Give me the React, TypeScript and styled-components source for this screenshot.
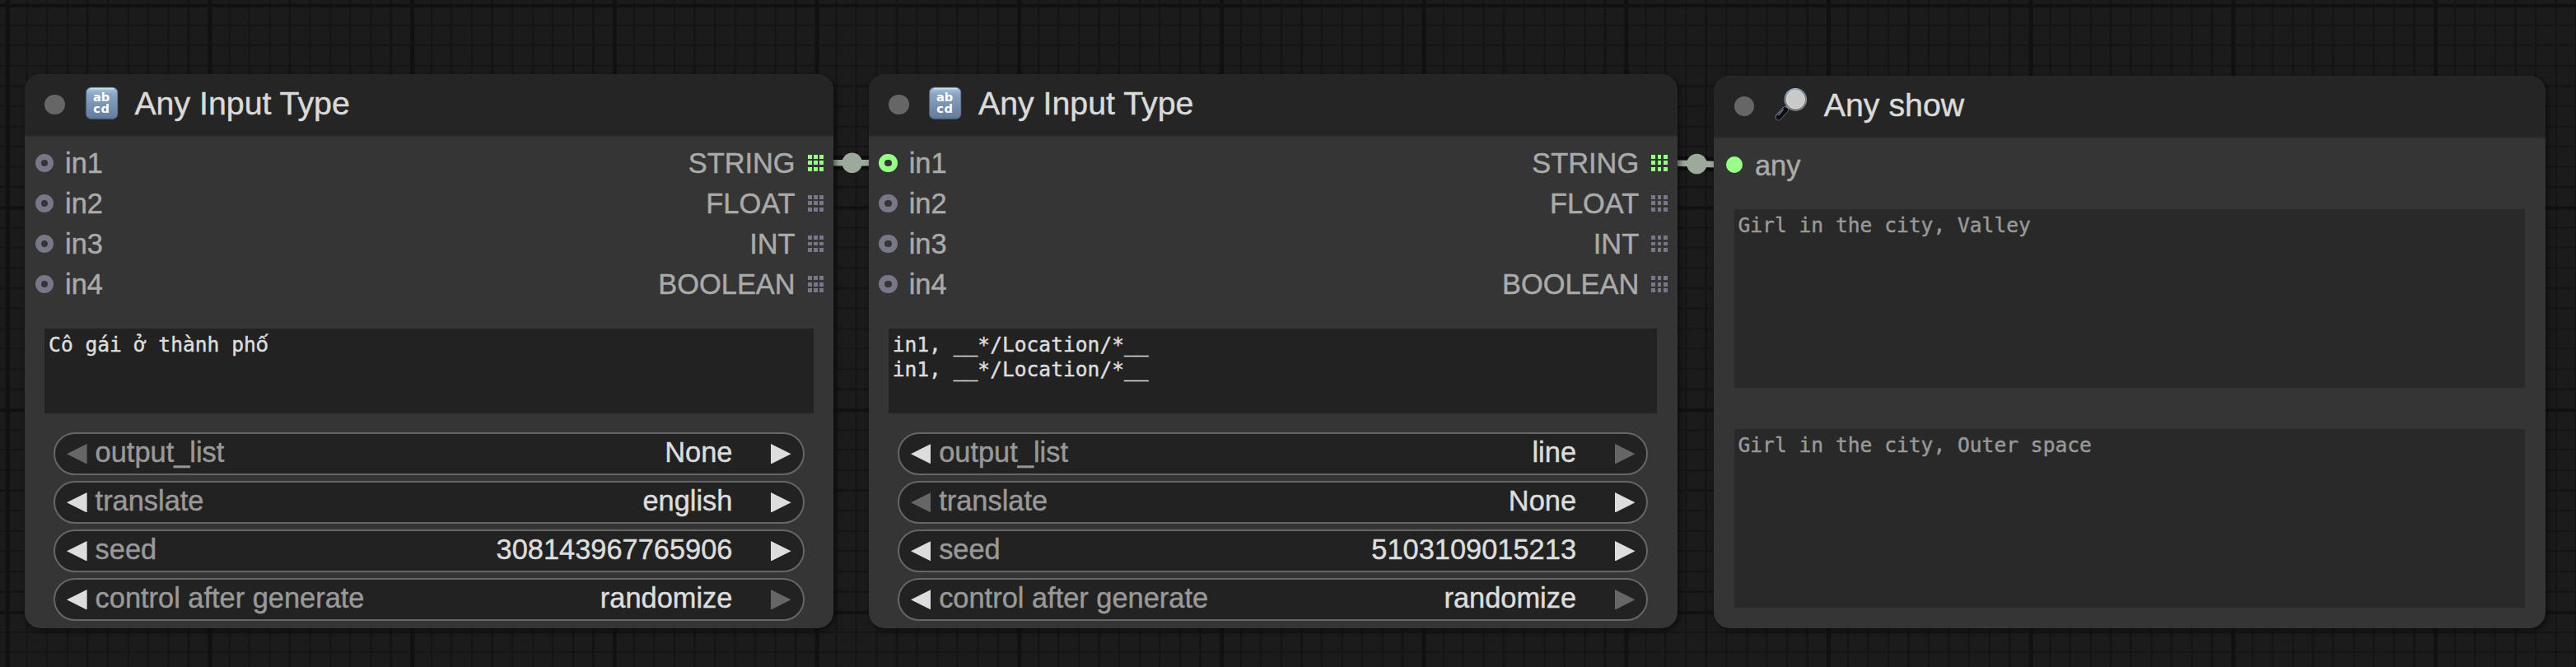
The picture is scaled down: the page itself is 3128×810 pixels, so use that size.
import React from "react";
import styled, { createGlobalStyle, css } from "styled-components";

const GlobalStyle = createGlobalStyle`
  html, body { margin: 0; padding: 0; background: #1b1b1b; }
  * { box-sizing: border-box; }
`;

const fine = "#141414";
const bold = "#111111";

const Canvas = styled.main`
  position: relative;
  width: 3128px;
  height: 810px;
  overflow: hidden;
  font-family: "Liberation Sans", Arial, sans-serif;
  -webkit-text-stroke: 0.45px currentColor;
  background-color: #1b1b1b;
  background-image:
    linear-gradient(to right, ${bold} 4.6px, transparent 4.6px),
    linear-gradient(to bottom, ${bold} 3.8px, transparent 3.8px),
    repeating-linear-gradient(to right, ${fine} 0 2.2px, transparent 2.2px 24.57px),
    repeating-linear-gradient(to bottom, ${fine} 0 2.2px, transparent 2.2px 24.57px);
  background-size: 245.7px 245.7px;
  background-position: 6.9px 4.9px;
`;

const Links = styled.svg`
  position: absolute;
  inset: 0;
  width: 3128px;
  height: 810px;
`;

const NodeCard = styled.section<{ $x: number; $y: number; $w: number; $h: number }>`
  position: absolute;
  left: ${(p) => p.$x}px;
  top: ${(p) => p.$y}px;
  width: ${(p) => p.$w}px;
  height: ${(p) => p.$h}px;
  display: flex;
  flex-direction: column;
  border-radius: 19.6px;
  background: #353535;
  box-shadow: 2.4px 2.4px 6px rgba(0, 0, 0, 0.5);
  overflow: hidden;
`;

const TitleBar = styled.header`
  flex: none;
  display: flex;
  align-items: center;
  height: 75.8px;
  padding: 0 0 0 24.2px;
  background: #252525;
  border-bottom: 2.4px solid #2b2b2b;
`;

const TitleDot = styled.span`
  width: 24.8px;
  height: 24.8px;
  border-radius: 50%;
  background: #666;
`;

const TitleIcon = styled.svg`
  width: 40px;
  height: 40px;
  margin: -4.8px 0 0 24.6px;
  -webkit-text-stroke: 0;
`;

const Title = styled.h1`
  margin: -3.2px 0 0 19.8px;
  font-size: 39.3px;
  line-height: 46px;
  font-weight: 400;
  color: #dadada;
  white-space: pre;
`;

const SlotArea = styled.div`
  display: flex;
  justify-content: space-between;
  padding: 7.4px 12.2px 0 12.7px;
`;

const SlotColumn = styled.div<{ $end?: boolean }>`
  display: flex;
  flex-direction: column;
  align-items: ${(p) => (p.$end ? "flex-end" : "flex-start")};
`;

const Slot = styled.div`
  display: flex;
  align-items: center;
  height: 49.13px;
  font-size: 34.4px;
  line-height: 40px;
  color: #aaa;
`;

const SlotLabel = styled.span<{ $drop?: number }>`
  padding-top: ${(p) => p.$drop ?? 0}px;
`;

const Ring = styled.span<{ $on?: boolean }>`
  width: 22.4px;
  height: 22.4px;
  margin-right: 14px;
  border: 7.4px solid ${(p) => (p.$on ? "#9f8" : "#778")};
  border-radius: 50%;
`;

const Dot = styled.span`
  width: 19.8px;
  height: 19.8px;
  margin: 0 15px 0 2px;
  border-radius: 50%;
  background: #9f8;
`;

const Matrix = styled.span`
  display: grid;
  grid-template-columns: repeat(3, 4.9px);
  grid-auto-rows: 4.9px;
  gap: 2.46px;
  margin-left: 15px;
`;

const MatrixCell = styled.i<{ $on?: boolean }>`
  background: ${(p) => (p.$on ? "#9f8" : "#778")};
`;

const TextBox = styled.div<{ $h: number; $top: number; $dim?: boolean }>`
  flex: none;
  height: ${(p) => p.$h}px;
  margin: ${(p) => p.$top}px 24.6px 0 24.2px;
  padding: 4.9px;
  background: #222;
  color: #ddd;
  font-family: "DejaVu Sans Mono", monospace;
  font-size: 24.6px;
  line-height: 30px;
  white-space: pre;
  ${(p) => p.$dim && css`background: #292929; color: #999;`}
`;

/* DejaVu Sans Mono has no precomposed "ố", its proportional sibling does. */
const StackedAccent = styled.span`
  font-family: "DejaVu Sans", sans-serif;
`;

const Widgets = styled.div`
  display: flex;
  flex-direction: column;
  gap: 7.2px;
  padding: 23.6px 35.6px 0 35.4px;
`;

const Widget = styled.div`
  display: flex;
  align-items: center;
  height: 51.8px;
  padding: 0 14.2px 0 13.8px;
  border: 2.4px solid #666;
  border-radius: 26px;
  background: #222;
  font-size: 34.4px;
  line-height: 40px;
`;

const WidgetLabel = styled.span`
  margin: -4.6px 0 0 9.8px;
  color: #999;
`;

const WidgetValue = styled.span`
  margin: -4.6px 46.6px 0 auto;
  color: #ddd;
`;

const Arrow = styled.svg<{ $off?: boolean }>`
  flex: none;
  width: 24.6px;
  height: 24.6px;
  fill: ${(p) => (p.$off ? "#666" : "#ddd")};
`;

function AbcdIcon() {
  return (
    <TitleIcon viewBox="0 0 40 40">
      <defs>
        <linearGradient id="key" x1="0" y1="0" x2="0" y2="1">
          <stop offset="0" stopColor="#b4c8dc" />
          <stop offset="0.2" stopColor="#8ba5c3" />
          <stop offset="0.6" stopColor="#7891b0" />
          <stop offset="1" stopColor="#647d9c" />
        </linearGradient>
      </defs>
      <rect x="0.2" y="0.7" width="39" height="39" rx="6.5" fill="#56708f" />
      <rect x="1.2" y="1.7" width="37" height="36.6" rx="5.5" fill="url(#key)" />
      <path d="M6 2.5h28" stroke="#d3e0ec" strokeWidth="1.4" strokeLinecap="round" />
      <g fill="#fff" fontFamily="DejaVu Sans, sans-serif" fontWeight="700" fontSize="14.6">
        <text x="9" y="18.2">ab</text>
        <text x="9.2" y="32.4" textLength="19.8">cd</text>
      </g>
    </TitleIcon>
  );
}

function GlassIcon() {
  return (
    <TitleIcon viewBox="0 0 40 40">
      <defs>
        <linearGradient id="rim" x1="0" y1="0" x2="0.3" y2="1">
          <stop offset="0" stopColor="#afc2e2" />
          <stop offset="0.35" stopColor="#7d8590" />
          <stop offset="1" stopColor="#838386" />
        </linearGradient>
      </defs>
      <path d="M17 21.5L12.5 27" stroke="#9a9fa6" strokeWidth="4" />
      <path d="M12.6 26.4L4.6 35.2" stroke="#656b73" strokeWidth="8.4" strokeLinecap="round" />
      <path d="M12.8 26.7L4.8 35.4" stroke="#0c0d10" strokeWidth="6.4" strokeLinecap="round" />
      <path d="M10.6 26L4.2 33" stroke="#66788a" strokeWidth="1.4" />
      <circle cx="25.3" cy="13.8" r="12.6" fill="#d0d0d0" stroke="url(#rim)" strokeWidth="2.6" />
      <circle cx="25.3" cy="13.8" r="11" fill="#c9c9c9" stroke="#dedede" strokeWidth="0.9" />
    </TitleIcon>
  );
}

const LeftArrow = ({ off }: { off?: boolean }) => (
  <Arrow viewBox="0 0 10 10" $off={off}><path d="M10 0V10L0 5Z" /></Arrow>
);
const RightArrow = ({ off }: { off?: boolean }) => (
  <Arrow viewBox="0 0 10 10" $off={off}><path d="M0 0V10L10 5Z" /></Arrow>
);

type Row = { label: string; value: string; prevOff?: boolean; nextOff?: boolean };

const inputs = ["in1", "in2", "in3", "in4"];
const outputs = ["STRING", "FLOAT", "INT", "BOOLEAN"];

function InputNode({ x, linked, text, rows }: { x: number; linked?: boolean; text: React.ReactNode; rows: Row[] }) {
  return (
    <NodeCard $x={x} $y={90} $w={982.4} $h={672.7}>
      <TitleBar>
        <TitleDot />
        <AbcdIcon />
        <Title>Any Input Type</Title>
      </TitleBar>
      <SlotArea>
        <SlotColumn>
          {inputs.map((name, i) => (
            <Slot key={name}>
              <Ring $on={linked && i === 0} />
              <SlotLabel>{name}</SlotLabel>
            </Slot>
          ))}
        </SlotColumn>
        <SlotColumn $end>
          {outputs.map((name, i) => (
            <Slot key={name}>
              <SlotLabel>{name}</SlotLabel>
              <Matrix>
                {Array.from({ length: 9 }, (_, k) => <MatrixCell key={k} $on={i === 0} />)}
              </Matrix>
            </Slot>
          ))}
        </SlotColumn>
      </SlotArea>
      <TextBox $h={102.7} $top={29.3}>{text}</TextBox>
      <Widgets>
        {rows.map((r) => (
          <Widget key={r.label}>
            <LeftArrow off={r.prevOff} />
            <WidgetLabel>{r.label}</WidgetLabel>
            <WidgetValue>{r.value}</WidgetValue>
            <RightArrow off={r.nextOff} />
          </Widget>
        ))}
      </Widgets>
    </NodeCard>
  );
}

export default function App() {
  return (
    <Canvas>
      <GlobalStyle />
      <Links viewBox="0 0 3128 810">
        <g fill="none" stroke="#000" strokeOpacity="0.5" strokeWidth="17.2">
          <path d="M990 197.7H1080" />
          <path d="M2014 197.7C2037 197.7 2083 200 2106 200" />
        </g>
        <g fill="none" stroke="#9ca99b" strokeWidth="7.6">
          <path d="M990 197.7H1080" />
          <path d="M2014 197.7C2037 197.7 2083 200 2106 200" />
        </g>
        <circle cx="1034.7" cy="197.7" r="12.3" fill="#9ca99b" />
        <circle cx="2060.4" cy="199" r="12.3" fill="#9ca99b" />
      </Links>
      <InputNode
        x={30}
        text={<>Cô gái ở thành ph<StackedAccent>{"\u1ed1"}</StackedAccent></>}
        rows={[
          { label: "output_list", value: "None", prevOff: true },
          { label: "translate", value: "english" },
          { label: "seed", value: "308143967765906" },
          { label: "control after generate", value: "randomize", nextOff: true },
        ]}
      />
      <InputNode
        x={1054.6}
        linked
        text={"in1, __*/Location/*__\nin1, __*/Location/*__"}
        rows={[
          { label: "output_list", value: "line", nextOff: true },
          { label: "translate", value: "None", prevOff: true },
          { label: "seed", value: "5103109015213" },
          { label: "control after generate", value: "randomize", nextOff: true },
        ]}
      />
      <NodeCard $x={2081.4} $y={92.2} $w={1009.6} $h={670.5}>
        <TitleBar>
          <TitleDot />
          <GlassIcon />
          <Title>Any show</Title>
        </TitleBar>
        <SlotArea>
          <Slot>
            <Dot />
            <SlotLabel $drop={2}>any</SlotLabel>
          </Slot>
        </SlotArea>
        <TextBox $dim $h={217.3} $top={29.5}>Girl in the city, Valley</TextBox>
        <TextBox $dim $h={217.3} $top={49.5}>Girl in the city, Outer space</TextBox>
      </NodeCard>
    </Canvas>
  );
}
